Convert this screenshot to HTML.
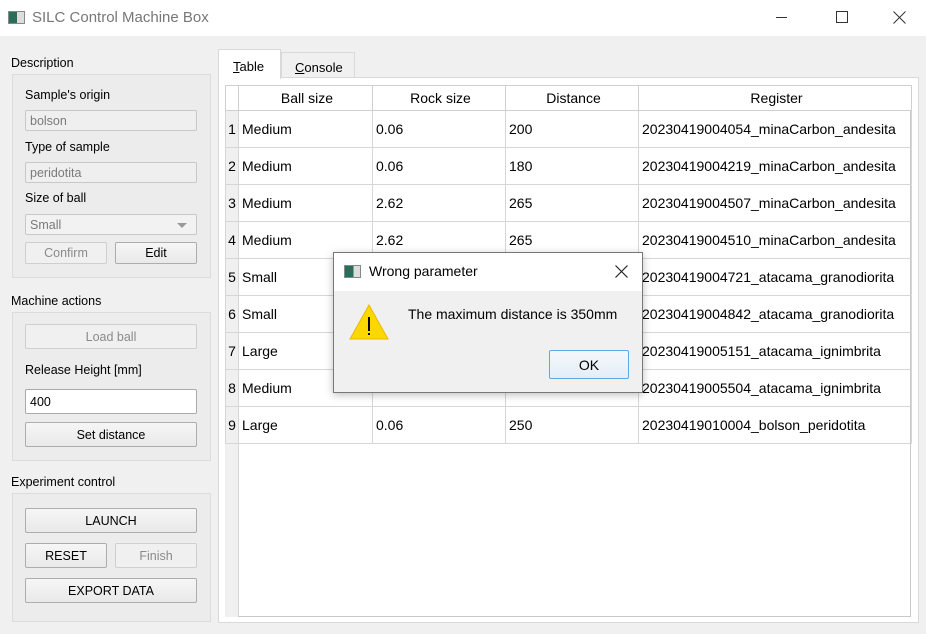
<!DOCTYPE html><html><head><style>
*{box-sizing:border-box}
body{margin:0;width:926px;height:634px;background:#f0f0f0;font-family:"Liberation Sans",sans-serif;font-size:13px;color:#000;position:relative;overflow:hidden}
.a{position:absolute}
.btn{position:absolute;border:1px solid #adadad;border-radius:2px;text-align:center;font-size:12.5px;display:flex;align-items:center;justify-content:center;background:linear-gradient(#f6f6f6,#e9e9e9)}
.dis{color:#8a8a8a;border-color:#cfcfcf;background:#f0f0f0}
.grp{position:absolute;border:1px solid #dcdcdc;background:#ececec}
.inp{position:absolute;border:1px solid #c8c8c8;background:#efefef;color:#7a7a7a;font-size:12.5px;padding-left:4px;display:flex;align-items:center;border-radius:2px}
table{border-collapse:collapse;position:absolute;left:225px;top:85px;font-size:14px;table-layout:fixed;width:686px}
td,th{border:1px solid #d6d6d6;height:37px;padding:0 0 0 3px;text-align:left;font-weight:normal;white-space:nowrap;overflow:hidden}
th{height:25px;text-align:center;background:#fff;border-color:#cfcfcf}
td.n{padding:0;text-align:center;background:#f0f0f0}
</style></head><body>
<div class="a" style="left:0;top:0;width:926px;height:36px;background:#fff"></div>
<div class="a" style="left:8px;top:11px;width:17px;height:13px;border:1px solid #888;background:linear-gradient(90deg,#2d6b5a 0 55%,#ddd 55%)"></div>
<div class="a" style="left:32px;top:9px;font-size:15px;color:#777">SILC Control Machine Box</div>
<div class="a" style="left:776px;top:17px;width:11px;height:1px;background:#333"></div>
<div class="a" style="left:836px;top:11px;width:12px;height:12px;border:1px solid #333"></div>
<svg class="a" style="left:893px;top:11px" width="13" height="13"><path d="M0.5 0.5L12.5 12.5M12.5 0.5L0.5 12.5" stroke="#333" stroke-width="1"/></svg>

<div class="a" style="left:11px;top:56px;font-size:12.5px">Description</div>
<div class="grp" style="left:12px;top:74px;width:199px;height:204px"></div>
<div class="a" style="left:25px;top:88px;font-size:12.5px">Sample's origin</div>
<div class="inp" style="left:25px;top:110px;width:172px;height:21px">bolson</div>
<div class="a" style="left:25px;top:140px;font-size:12.5px">Type of sample</div>
<div class="inp" style="left:25px;top:162px;width:172px;height:21px">peridotita</div>
<div class="a" style="left:25px;top:191px;font-size:12.5px">Size of ball</div>
<div class="inp" style="left:25px;top:214px;width:172px;height:21px;background:#f2f2f2">Small<span style="position:absolute;right:9px;top:8px;border:5px solid transparent;border-top:5px solid #999;border-bottom:0"></span></div>
<div class="btn dis" style="left:25px;top:242px;width:82px;height:22px">Confirm</div>
<div class="btn" style="left:115px;top:242px;width:82px;height:22px">Edit</div>

<div class="a" style="left:11px;top:294px;font-size:12.5px">Machine actions</div>
<div class="grp" style="left:12px;top:312px;width:199px;height:149px"></div>
<div class="btn dis" style="left:25px;top:324px;width:172px;height:25px">Load ball</div>
<div class="a" style="left:25px;top:363px;font-size:12.5px">Release Height [mm]</div>
<div class="inp" style="left:25px;top:389px;width:172px;height:25px;background:#fff;color:#000;border-color:#aaa">400</div>
<div class="btn" style="left:25px;top:422px;width:172px;height:25px">Set distance</div>

<div class="a" style="left:11px;top:475px;font-size:12.5px">Experiment control</div>
<div class="grp" style="left:12px;top:493px;width:199px;height:129px"></div>
<div class="btn" style="left:25px;top:508px;width:172px;height:25px">LAUNCH</div>
<div class="btn" style="left:25px;top:543px;width:82px;height:25px">RESET</div>
<div class="btn dis" style="left:115px;top:543px;width:82px;height:25px">Finish</div>
<div class="btn" style="left:25px;top:578px;width:172px;height:25px">EXPORT DATA</div>

<div class="a" style="left:218px;top:77px;width:701px;height:546px;border:1px solid #d9d9d9;background:#fff"></div>
<div class="a" style="left:218px;top:49px;width:63px;height:30px;border:1px solid #d9d9d9;border-bottom:none;background:#fff;font-size:13px;padding:9px 0 0 14px"><u>T</u>able</div>
<div class="a" style="left:281px;top:52px;width:74px;height:26px;border:1px solid #d9d9d9;background:#f0f0f0;font-size:13px;padding:7px 0 0 13px"><u>C</u>onsole</div>
<div class="a" style="left:225px;top:85px;width:686px;height:532px;border:1px solid #c8c8c8;background:#fff"></div>
<div class="a" style="left:225px;top:110px;width:14px;height:507px;background:#f0f0f0;border-right:1px solid #d6d6d6"></div>
<table>
<colgroup><col style="width:13px"><col style="width:134px"><col style="width:133px"><col style="width:133px"><col style="width:273px"></colgroup>
<tr><th style="padding:0"></th><th>Ball size</th><th>Rock size</th><th>Distance</th><th>Register</th></tr>
<tr><td class="n">1</td><td>Medium</td><td>0.06</td><td>200</td><td>20230419004054_minaCarbon_andesita</td></tr>
<tr><td class="n">2</td><td>Medium</td><td>0.06</td><td>180</td><td>20230419004219_minaCarbon_andesita</td></tr>
<tr><td class="n">3</td><td>Medium</td><td>2.62</td><td>265</td><td>20230419004507_minaCarbon_andesita</td></tr>
<tr><td class="n">4</td><td>Medium</td><td>2.62</td><td>265</td><td>20230419004510_minaCarbon_andesita</td></tr>
<tr><td class="n">5</td><td>Small</td><td>0.06</td><td>240</td><td>20230419004721_atacama_granodiorita</td></tr>
<tr><td class="n">6</td><td>Small</td><td>0.06</td><td>240</td><td>20230419004842_atacama_granodiorita</td></tr>
<tr><td class="n">7</td><td>Large</td><td>0.06</td><td>240</td><td>20230419005151_atacama_ignimbrita</td></tr>
<tr><td class="n">8</td><td>Medium</td><td>0.06</td><td>240</td><td>20230419005504_atacama_ignimbrita</td></tr>
<tr><td class="n">9</td><td>Large</td><td>0.06</td><td>250</td><td>20230419010004_bolson_peridotita</td></tr>
</table>

<div class="a" style="left:333px;top:252px;width:310px;height:141px;border:1px solid #777;background:#f0f0f0;box-shadow:0 2px 8px rgba(0,0,0,.25)">
<div class="a" style="left:0;top:0;width:308px;height:38px;background:#fff"></div>
<div class="a" style="left:10px;top:12px;width:17px;height:13px;border:1px solid #888;background:linear-gradient(90deg,#2d6b5a 0 55%,#ddd 55%)"></div>
<div class="a" style="left:35px;top:10px;font-size:14px">Wrong parameter</div>
<svg class="a" style="left:281px;top:12px" width="13" height="13"><path d="M0.5 0.5L12.5 12.5M12.5 0.5L0.5 12.5" stroke="#222" stroke-width="1.2"/></svg>
<div class="a" style="left:74px;top:53px;font-size:14px">The maximum distance is 350mm</div>
<svg class="a" style="left:14px;top:50px" width="42" height="38"><polygon points="21,2 40,36 2,36" fill="#fcd800" stroke="#e8b800"/><rect x="20" y="14" width="2" height="14" fill="#000"/><rect x="20" y="30" width="2" height="2" fill="#000"/></svg>
<div class="a" style="left:215px;top:97px;width:80px;height:29px;border:1px solid #5ea8e6;border-radius:2px;background:linear-gradient(#f4f8fc,#e4edf6);font-size:14px;display:flex;align-items:center;justify-content:center">OK</div>
</div>
</body></html>
